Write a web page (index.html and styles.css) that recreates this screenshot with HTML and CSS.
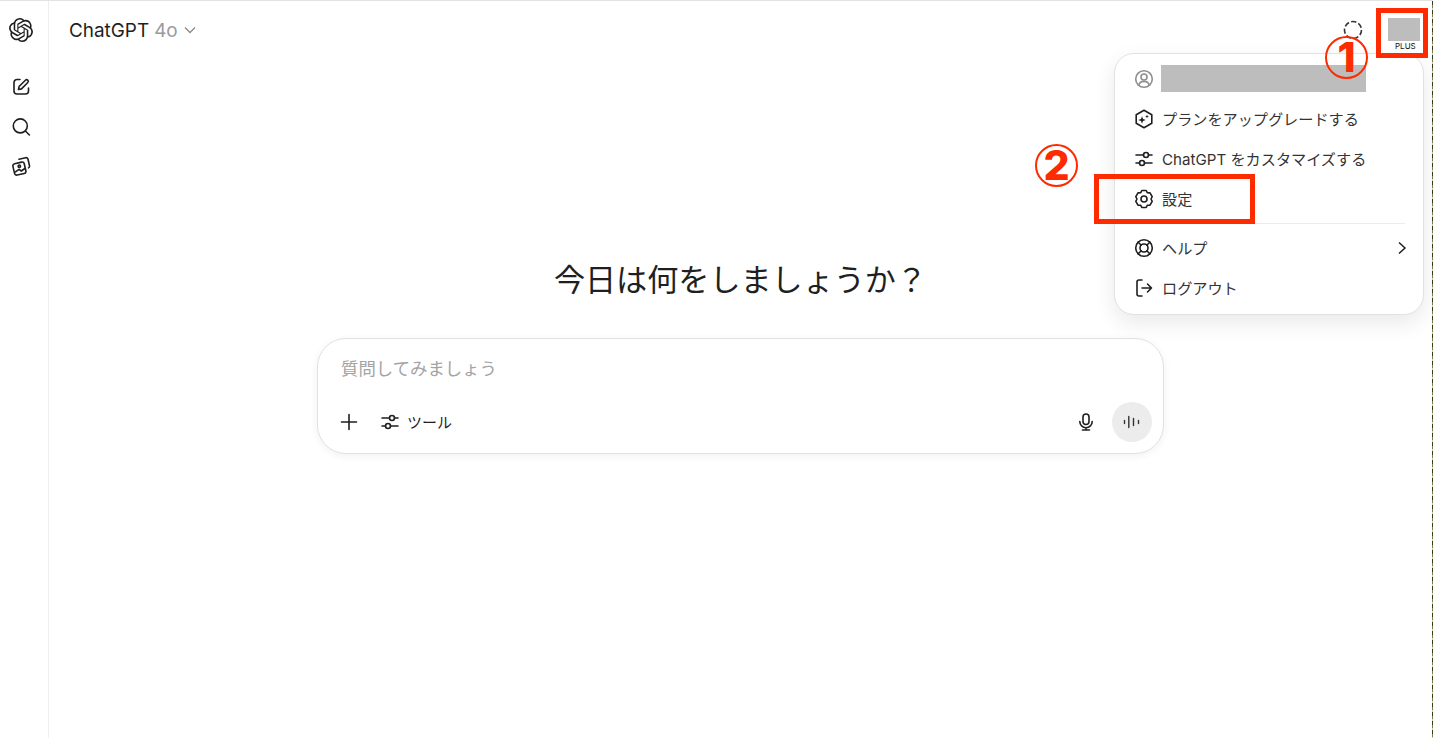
FILE: index.html
```html
<!DOCTYPE html>
<html lang="ja">
<head>
<meta charset="utf-8">
<title>ChatGPT</title>
<link rel="stylesheet" href="styles.css">
</head>
<body>
<div class="app">
  <aside class="rail">
    <svg class="rail-logo" viewBox="0 0 24 24"><path fill="#1f1f1f" d="M22.2819 9.8211a5.9847 5.9847 0 0 0-.5157-4.9108 6.0462 6.0462 0 0 0-6.5098-2.9A6.0651 6.0651 0 0 0 4.9807 4.1818a5.9847 5.9847 0 0 0-3.9977 2.9 6.0462 6.0462 0 0 0 .7427 7.0966 5.98 5.98 0 0 0 .511 4.9107 6.051 6.051 0 0 0 6.5146 2.9001A5.9847 5.9847 0 0 0 13.2599 24a6.0557 6.0557 0 0 0 5.7718-4.2058 5.9894 5.9894 0 0 0 3.9977-2.9001 6.0557 6.0557 0 0 0-.7475-7.0729zm-9.022 12.6081a4.4755 4.4755 0 0 1-2.8764-1.0408l.1419-.0804 4.7783-2.7582a.7948.7948 0 0 0 .3927-.6813v-6.7369l2.02 1.1686a.071.071 0 0 1 .038.052v5.5826a4.504 4.504 0 0 1-4.4945 4.4944zm-9.6607-4.1254a4.4708 4.4708 0 0 1-.5346-3.0137l.142.0852 4.783 2.7582a.7712.7712 0 0 0 .7806 0l5.8428-3.3685v2.3324a.0804.0804 0 0 1-.0332.0615L9.74 19.9502a4.4992 4.4992 0 0 1-6.1408-1.6464zM2.3408 7.8956a4.485 4.485 0 0 1 2.3655-1.9728V11.6a.7664.7664 0 0 0 .3879.6765l5.8144 3.3543-2.0201 1.1685a.0757.0757 0 0 1-.071 0l-4.8303-2.7865A4.504 4.504 0 0 1 2.3408 7.872zm16.5963 3.8558L13.1038 8.364 15.1192 7.2a.0757.0757 0 0 1 .071 0l4.8303 2.7913a4.4944 4.4944 0 0 1-.6765 8.1042v-5.6772a.79.79 0 0 0-.407-.667zm2.0107-3.0231l-.142-.0852-4.7735-2.7818a.7759.7759 0 0 0-.7854 0L9.409 9.2297V6.8974a.0662.0662 0 0 1 .0284-.0615l4.8303-2.7866a4.4992 4.4992 0 0 1 6.6802 4.66zM8.3065 12.863l-2.02-1.1638a.0804.0804 0 0 1-.038-.0567V6.0742a4.4992 4.4992 0 0 1 7.3757-3.4537l-.142.0805L8.704 5.459a.7948.7948 0 0 0-.3927.6813zm1.0976-2.3654l2.602-1.4998 2.6069 1.4998v2.9994l-2.5974 1.4997-2.6067-1.4997Z"/></svg>
    <nav class="rail-nav">
      <svg class="ico" viewBox="0 0 20 20"><path d="M9 2.500H6a3 3 0 0 0-3 3v8.500a3 3 0 0 0 3 3h8.500a3 3 0 0 0 3-3v-3"/><path d="M7.500 12.500l.6-3 6.300-6.300a1.600 1.600 0 0 1 2.400 2.300l-6.300 6.400z"/></svg>
      <svg class="ico" viewBox="0 0 20 20"><circle cx="9.300" cy="8.900" r="7"/><path d="M14.400 14l4 4"/></svg>
      <svg class="ico" viewBox="0 0 20 20"><rect x="2.600" y="6.800" width="11.600" height="11.600" rx="2.200" transform="rotate(-13 8.400 12.600)"/><path d="M8 3.200l6.600-1.500a2 2 0 0 1 2.400 1.500l1.500 6.500a2 2 0 0 1-1 2.200"/><circle cx="8.300" cy="10.200" r="1.200"/><path d="M4.500 15.800l3.600-2.500 2.200 1.700 3.600-2.500"/></svg>
    </nav>
  </aside>
  <main class="main">
    <header class="topbar">
      <div class="model">
        <span class="model-name">ChatGPT</span>
        <span class="model-ver">4o</span>
        <svg class="chev" viewBox="0 0 12 8"><path d="M1 1.500l5 5 5-5"/></svg>
      </div>
      <div class="topbar-right">
        <svg class="dashed" viewBox="0 0 20 20"><circle cx="10" cy="10" r="8.500" pathLength="70" stroke-dasharray="7 3"/></svg>
        <div class="avatar">
          <span class="avatar-img"></span>
          <span class="plus">PLUS</span>
        </div>
      </div>
    </header>
    <section class="center">
      <h1 class="title">今日は何をしましょうか？</h1>
      <div class="composer">
        <div class="placeholder">質問してみましょう</div>
        <div class="composer-row">
          <svg class="ico plus-ico" viewBox="0 0 20 20"><path d="M10 2.500v15M2.500 10h15"/></svg>
          <div class="tools">
            <svg class="ico" viewBox="0 0 20 20"><path d="M2 6h7.500M14.500 6H18M2 14h3.500M10.500 14H18"/><circle cx="12" cy="6" r="2.500"/><circle cx="8" cy="14" r="2.500"/></svg>
            <span class="tools-label">ツール</span>
          </div>
          <svg class="ico mic" viewBox="0 0 20 20"><rect x="7" y="2" width="6" height="10.500" rx="3"/><path d="M3.800 9.500a6.200 6.200 0 0 0 12.400 0M10 15.700V18M6.500 18h7"/></svg>
          <button class="voice" type="button">
            <svg viewBox="0 0 20 20"><path d="M6.800 4.500v11M11.500 6.500v7M2.500 8.500v3M16.500 8.500v3"/></svg>
          </button>
        </div>
      </div>
    </section>
  </main>
  <div class="edge"></div>
</div>

<div class="menu">
  <div class="item">
    <svg class="ico muted" viewBox="0 0 20 20"><circle cx="10" cy="10" r="8.300"/><circle cx="10" cy="8" r="3"/><path d="M4.600 16.200c1-2.800 3.100-3.800 5.400-3.800s4.400 1 5.400 3.800"/></svg>
    <span class="redact"></span>
  </div>
  <div class="item">
    <svg class="ico" viewBox="0 0 20 20"><path d="M10 1.200l7.800 4.500v8.600L10 18.800l-7.800-4.500V5.700z"/><path class="solid" d="M8 7.200l1 2.800 2.800 1-2.800 1-1 2.800-1-2.800-2.800-1 2.800-1zM13 5.500l.5 1.500 1.500.5-1.500.5-.5 1.500-.5-1.500-1.500-.5 1.500-.5z"/></svg>
    <span class="label">プランをアップグレードする</span>
  </div>
  <div class="item">
    <svg class="ico" viewBox="0 0 20 20"><path d="M2 6h7.500M14.500 6H18M2 14h3.500M10.500 14H18"/><circle cx="12" cy="6" r="2.500"/><circle cx="8" cy="14" r="2.500"/></svg>
    <span class="label">ChatGPT をカスタマイズする</span>
  </div>
  <div class="item">
    <svg class="ico" viewBox="0 0 20 20"><path d="M7.800 1.500h4.400l1.200 2.300 2.600.1 2.200 3.800L17 10l1.200 2.300-2.200 3.800-2.600.1-1.200 2.300H7.800l-1.200-2.300-2.600-.1-2.200-3.800L3 10 1.800 7.700 4 3.900l2.600-.1z"/><circle cx="10" cy="10" r="3"/></svg>
    <span class="label">設定</span>
  </div>
  <div class="divider"></div>
  <div class="item">
    <svg class="ico" viewBox="0 0 20 20"><circle cx="10" cy="10" r="8.300"/><circle cx="10" cy="10" r="4"/><path d="M4.200 4.200l3 3M15.800 4.200l-3 3M4.200 15.800l3-3M15.800 15.800l-3-3"/></svg>
    <span class="label grow">ヘルプ</span>
    <svg class="caret" viewBox="0 0 10 14"><path d="M2 1.500L8 7l-6 5.500"/></svg>
  </div>
  <div class="item">
    <svg class="ico" viewBox="0 0 20 20"><path d="M8 2H5a2 2 0 0 0-2 2v12a2 2 0 0 0 2 2h3M8 10h9.500M13.500 6l4 4-4 4"/></svg>
    <span class="label">ログアウト</span>
  </div>
</div>

<div class="mark mark-avatar"></div>
<div class="mark mark-settings"></div>
<div class="badge badge-one">1</div>
<div class="badge badge-two">2</div>
</body>
</html>
```
FILE: styles.css
```css
* { box-sizing: border-box; }
html, body { margin: 0; height: 100%; background: #fff; overflow: hidden; }
body {
  font-family: Inter, "Noto Sans CJK JP", sans-serif;
  color: #1f1f1f;
  position: relative;
}
svg { display: block; flex: none; }
.ico {
  width: 20px; height: 20px;
  fill: none; stroke: #1f1f1f; stroke-width: 1.600;
  stroke-linecap: round; stroke-linejoin: round;
}
.ico .solid { fill: #1f1f1f; stroke: none; }
.ico.muted { stroke: #8f8f8f; }

.app {
  display: flex; height: 738px;
  border-top: 1px solid #e3e3e3;
}
.rail {
  width: 49px; flex: none;
  border-right: 1px solid #efefef;
  display: flex; flex-direction: column; align-items: center;
  padding: 17px 7px 0 0;
}
.rail-logo { width: 24px; height: 24px; }
.rail-nav { display: flex; flex-direction: column; gap: 19.500px; margin-top: 35px; }

.main { flex: 1; min-width: 0; display: flex; flex-direction: column; }
.topbar {
  height: 58px; flex: none;
  display: flex; align-items: flex-start; justify-content: space-between;
  padding: 0 12px 0 20px;
}
.model { display: flex; align-items: center; gap: 5px; height: 58px; font-size: 18.900px; }
.model-ver { color: #9b9b9b; }
.chev { width: 12px; height: 8px; margin-left: 1px; fill: none; stroke: #8a8a8a; stroke-width: 1.300; }
.topbar-right { display: flex; align-items: flex-start; gap: 25px; padding-top: 17px; }
.dashed {
  width: 20px; height: 20px; margin-top: 2px; margin-left: -2px;
  fill: none; stroke: #333; stroke-width: 1.600;
}
.avatar { width: 32px; position: relative; }
.avatar-img { display: block; height: 23px; background: #bdbdbd; }
.plus {
  position: absolute; left: 4px; top: 23px;
  padding: 0 3px; line-height: 11px; height: 11px;
  font-size: 8px; color: #111; background: #fff; border-radius: 6px;
}

.center {
  display: flex; flex-direction: column; align-items: center;
  padding-top: 199px;
}
.title {
  margin: 0; font-size: 31.100px; font-weight: 400; line-height: 44px;
  color: #1f1f1f;
}
.composer {
  width: 847px; height: 116px; margin-top: 36px;
  border: 1px solid #e2e2e2; border-radius: 29px;
  box-shadow: 0 2px 8px rgba(0,0,0,.06);
  padding: 0 11px 0 23px;
  display: flex; flex-direction: column; background: #fff;
}
.placeholder { font-size: 17.400px; line-height: 26px; color: #a3a3a3; margin-top: 17px; }
.composer-row { display: flex; align-items: center; margin-top: 20px; height: 40px; }
.plus-ico { margin-left: -2px; }
.tools { display: flex; align-items: center; gap: 7px; margin-left: 21px; font-size: 15px; flex: 1; }
.tools-label { margin-bottom: 2px; }
.mic { margin-right: 16px; }
.voice {
  width: 40px; height: 40px; border: 0; padding: 0; border-radius: 50%;
  background: #ececec; display: flex; align-items: center; justify-content: center;
}
.voice svg { width: 20px; height: 20px; fill: none; stroke: #333; stroke-width: 1.400; stroke-linecap: round; }

.edge {
  width: 1px; flex: none;
  background: repeating-linear-gradient(#3a3a22 0 4px, #7d7d4c 4px 7px, #c9c9b0 7px 9px);
}

.menu {
  position: absolute; left: 1114px; top: 53px; width: 310px; height: 262px;
  background: #fff; border: 1px solid #e2e2e2; border-radius: 20px;
  box-shadow: 0 8px 22px rgba(0,0,0,.09);
  padding: 5px 0;
  font-size: 15.150px; color: #333;
}
.item {
  height: 40px; display: flex; align-items: center; gap: 8px;
  padding: 0 16px 0 19px;
}
.label { margin-bottom: 2px; }
.grow { flex: 1; }
.redact { width: 205px; height: 27px; margin: 0 0 2px -1px; background: #bdbdbd; }
.divider { height: 1px; background: #ececec; margin: 4px 18px; }
.caret { width: 10px; height: 14px; fill: none; stroke: #1f1f1f; stroke-width: 1.500; }

.mark { position: absolute; border: 5px solid #ff2b00; }
.mark-avatar { left: 1376px; top: 8px; width: 52px; height: 50px; }
.mark-settings { left: 1094px; top: 174px; width: 161px; height: 50px; }
.badge {
  position: absolute; width: 43px; height: 43px;
  border: 2px solid #ff2b00; border-radius: 50%;
  display: flex; align-items: center; justify-content: center;
  font-family: Inter, sans-serif; font-weight: 800; font-size: 41px; line-height: 1; color: #ff2b00;
}
.badge-one { left: 1325px; top: 36px; }
.badge-two { left: 1035px; top: 144px; }
```
